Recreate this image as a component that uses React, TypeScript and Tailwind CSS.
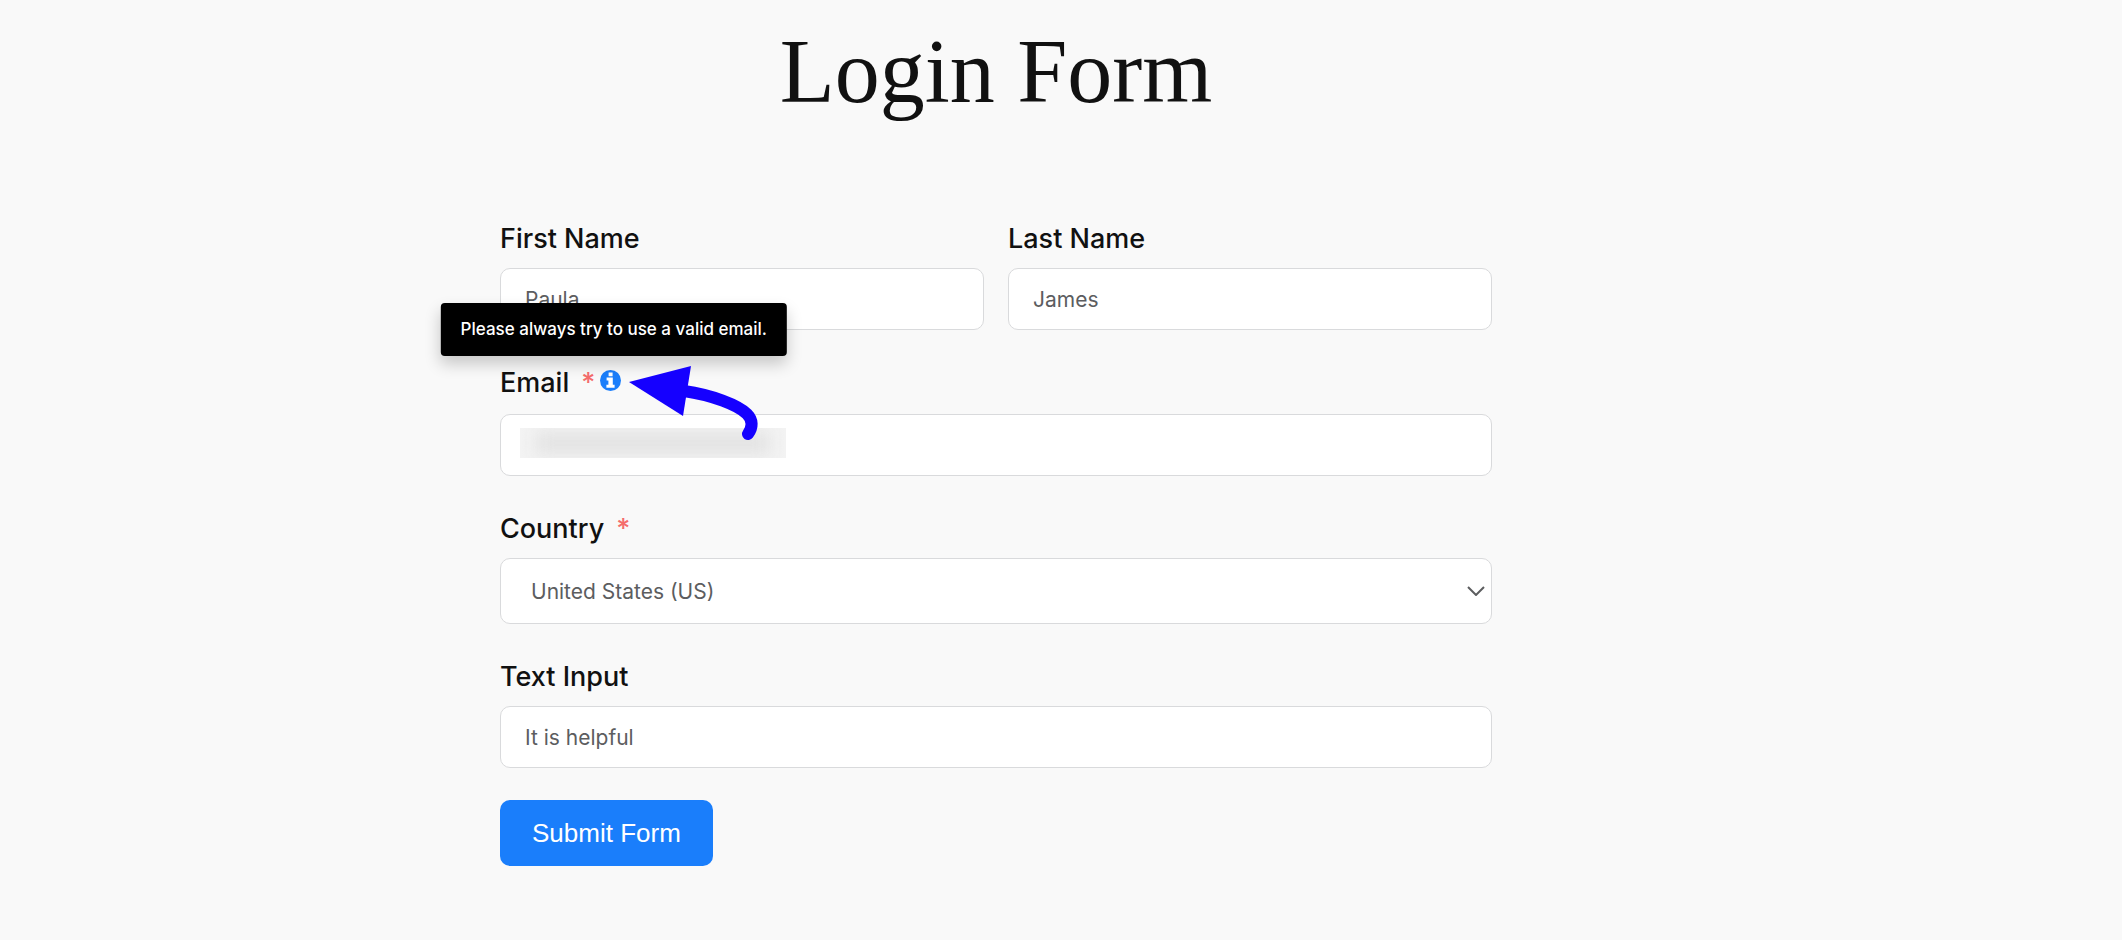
import type { ReactNode } from "react";

const inputStyle =
  "block h-[62px] w-full rounded-[10px] border border-[#d9dadc] bg-white px-6 text-[21px] text-[#5c5d5f] outline-none";

type FieldProps = {
  id: string;
  label: string;
  required?: boolean;
  extra?: ReactNode;
  children: ReactNode;
};

function Field({ id, label, required, extra, children }: FieldProps) {
  return (
    <div>
      <div className="relative mb-[11px] flex items-start">
        <label htmlFor={id} className="text-[27px] font-medium leading-9">
          {label}
          {required && <span className="ml-3 text-[#f56c6c]">*</span>}
        </label>
        {extra}
      </div>
      {children}
    </div>
  );
}

function InfoIcon() {
  return (
    <svg className="size-[21px]" viewBox="0 0 21 21" aria-hidden="true">
      <circle cx="10.5" cy="10.5" r="10.5" fill="#1a7efb" />
      <path
        d="M8.6 2.4H12.6V6.2H8.6ZM6.6 7.4H12.8V14.8H14.6V17.8H6.4V14.8H8.4V10.4H6.6Z"
        fill="#ffffff"
      />
    </svg>
  );
}

function EmailHint() {
  return (
    <>
      <div className="relative mb-3 ml-[5px] mt-[5px] pr-[6px]">
        <button type="button" aria-label="Email help" aria-describedby="email-tip" className="block">
          <InfoIcon />
        </button>
        <div
          id="email-tip"
          role="tooltip"
          className="absolute bottom-full left-1/2 z-10 mb-[14px] -translate-x-1/2 whitespace-nowrap rounded bg-black px-5 text-[17px] font-medium leading-[53px] text-white shadow-[0_8px_16px_rgba(0,0,0,0.2)]"
        >
          Please always try to use a valid email.
        </div>
      </div>
      <svg className="absolute left-[128px] top-0 z-10 h-[78px] w-[136px]" viewBox="0 1 136 78" fill="none" aria-hidden="true">
        <path d="M56 27C84 31 110 41 119 50C125 56 125 63 120 70" stroke="#1500ff" strokeWidth="12" strokeLinecap="round" />
        <path d="M1 18L63 2L55 52Z" fill="#1500ff" />
      </svg>
    </>
  );
}

export default function App() {
  return (
    <main className="min-h-screen bg-[#f9f9f9] pb-[74px] pl-4 pr-[146px] pt-3 font-['Inter',sans-serif] text-[#111111]">
      <h1 className="text-center font-['Liberation_Serif',serif] text-[90px] leading-[120px]">Login Form</h1>

      <form className="mx-auto mt-[89px] max-w-[992px]" onSubmit={(e) => e.preventDefault()}>
        <div className="flex flex-col gap-[35px]">
          <div className="grid grid-cols-2 gap-6">
            <Field id="first-name" label="First Name">
              <input id="first-name" type="text" defaultValue="Paula" className={inputStyle} />
            </Field>
            <Field id="last-name" label="Last Name">
              <input id="last-name" type="text" defaultValue="James" className={inputStyle} />
            </Field>
          </div>

          <Field id="email" label="Email" required extra={<EmailHint />}>
            <div className="relative">
              <input id="email" type="email" className={inputStyle} />
              <div className="pointer-events-none absolute left-5 top-[14px] h-[30px] w-[266px] overflow-hidden bg-[#f3f3f3]">
                <div className="mx-4 my-1 h-[22px] bg-[#e3e3e3] blur-[8px]" />
              </div>
            </div>
          </Field>

          <Field id="country" label="Country" required>
            <div className="relative">
              <select
                id="country"
                defaultValue="US"
                className="block h-[66px] w-full appearance-none rounded-[10px] border border-[#d9dadc] bg-white px-[30px] pt-[2px] text-[21px] text-[#5c5d5f] outline-none"
              >
                <option value="US">United States (US)</option>
              </select>
              <svg
                className="pointer-events-none absolute right-[7px] top-7 h-[10px] w-[18px]"
                viewBox="0 0 18 10"
                fill="none"
                stroke="#5c5d5f"
                strokeWidth="2"
                aria-hidden="true"
              >
                <path d="M1 1L9 9L17 1" />
              </svg>
            </div>
          </Field>

          <Field id="text-input" label="Text Input">
            <input id="text-input" type="text" defaultValue="It is helpful" className={inputStyle} />
          </Field>
        </div>

        <button
          type="submit"
          className="mt-8 h-[66px] rounded-[10px] bg-[#1a7efb] px-8 font-['Liberation_Sans',sans-serif] text-[26px] text-white"
        >
          Submit Form
        </button>
      </form>
    </main>
  );
}
